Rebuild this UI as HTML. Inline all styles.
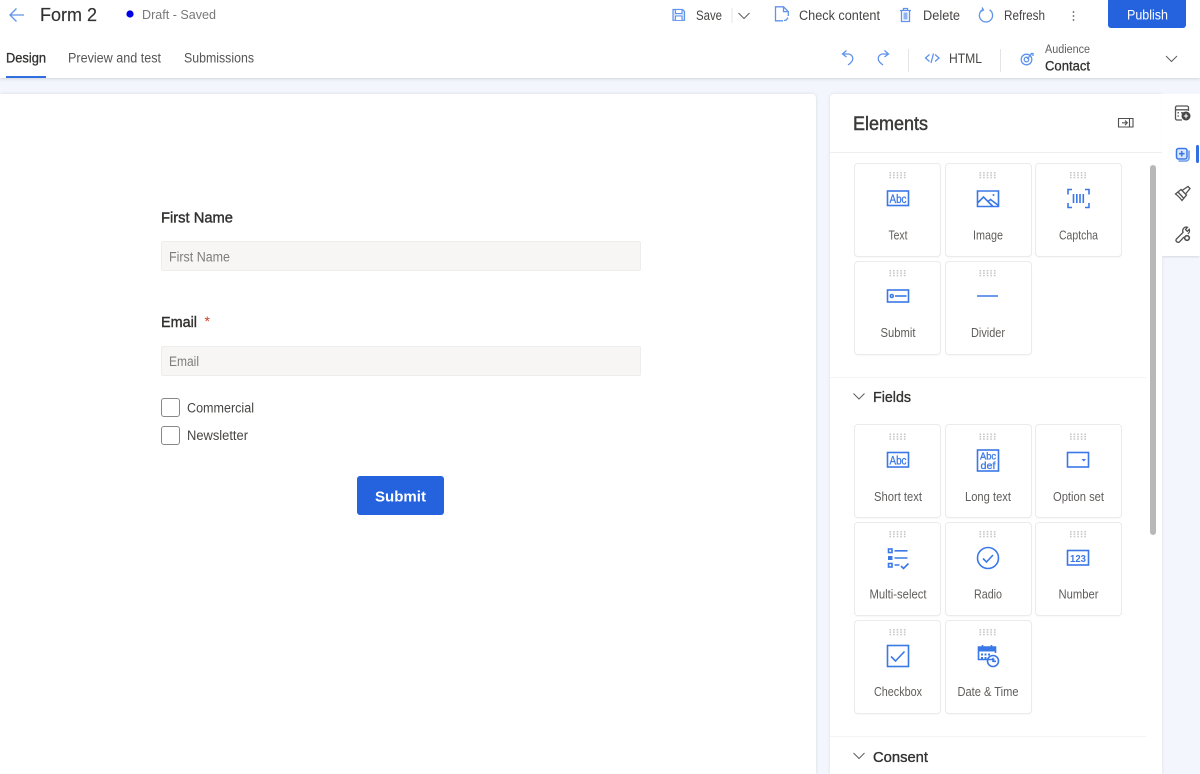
<!DOCTYPE html>
<html><head><meta charset="utf-8"><title>Form 2</title>
<style>
html,body{margin:0;padding:0;width:1200px;height:768px;overflow:hidden;background:#f3f6fd}
div{position:absolute;box-sizing:border-box}
svg{position:absolute;left:0;top:0;font-family:"Liberation Sans",sans-serif;filter:blur(.3px)}
.c{width:87px;height:94px;background:#fff;border:1px solid #ebebeb;border-radius:4px;box-shadow:0 1px 1px rgba(0,0,0,.03)}
.i{fill:none;stroke:#3b78e7;stroke-width:1.6}
.t{fill:none;stroke:#5f93ec;stroke-width:1.3}
.f{fill:#3b78e7}
.l{font-size:12.5px;fill:#605e5c;text-anchor:middle}
.h{font-size:13.5px;fill:#484644}
.a{fill:#3b78e7;stroke:#3b78e7;stroke-width:.3}
.d{fill:#c6c6c6}
</style></head><body>
<div style="left:0;top:0;width:1200px;height:78px;background:#fff;box-shadow:0 1px 3px rgba(0,0,0,.14)"></div>
<div style="left:0;top:94px;width:816px;height:680px;background:#fff;border-radius:0 4px 0 0;box-shadow:0 0 3px rgba(0,0,0,.12)"></div>
<div style="left:830px;top:94px;width:332px;height:680px;background:#fff;border-radius:4px 0 0 0;box-shadow:0 0 3px rgba(0,0,0,.1)"></div>
<div style="left:1162px;top:94px;width:38px;height:162px;background:#fff;box-shadow:0 2px 2px -1px rgba(0,0,0,.12)"></div>
<div style="left:830px;top:152px;width:332px;height:1px;background:#eee"></div>
<div style="left:830px;top:377px;width:316px;height:1px;background:#f4f4f4"></div>
<div style="left:830px;top:736px;width:316px;height:1px;background:#f4f4f4"></div>
<div style="left:1150px;top:165px;width:6px;height:370px;background:#b8b8b8;border-radius:3px"></div>
<div style="left:6px;top:76px;width:40px;height:2px;background:#2f6fe0"></div>
<div style="left:1108px;top:-2px;width:78px;height:30px;background:#2563de;border-radius:3px"></div>
<div style="left:1196px;top:145px;width:3px;height:18px;background:#2f6fe0;border-radius:2px"></div>
<div style="left:161px;top:241px;width:480px;height:30px;background:#f7f6f4;border:1px solid #eeedeb;border-radius:2px"></div>
<div style="left:161px;top:346px;width:480px;height:30px;background:#f7f6f4;border:1px solid #eeedeb;border-radius:2px"></div>
<div style="left:161px;top:398px;width:19px;height:19px;background:#fff;border:1.5px solid #8a8886;border-radius:3px"></div>
<div style="left:161px;top:426px;width:19px;height:19px;background:#fff;border:1.5px solid #8a8886;border-radius:3px"></div>
<div style="left:357px;top:476px;width:87px;height:39px;background:#2563de;border-radius:3px"></div>
<div class="c" style="left:854px;top:163px"></div><div class="c" style="left:945px;top:163px"></div><div class="c" style="left:1035px;top:163px"></div>
<div class="c" style="left:854px;top:261px"></div><div class="c" style="left:945px;top:261px"></div>
<div class="c" style="left:854px;top:424px"></div><div class="c" style="left:945px;top:424px"></div><div class="c" style="left:1035px;top:424px"></div>
<div class="c" style="left:854px;top:522px"></div><div class="c" style="left:945px;top:522px"></div><div class="c" style="left:1035px;top:522px"></div>
<div class="c" style="left:854px;top:620px"></div><div class="c" style="left:945px;top:620px"></div>

<svg width="1200" height="768" viewBox="0 0 1200 768" xmlns="http://www.w3.org/2000/svg">
<defs>
<g id="dots" class="d">
<rect x="0" y="0" width="1.6" height="1.5"/><rect x="3.6" y="0" width="1.6" height="1.5"/><rect x="7.2" y="0" width="1.6" height="1.5"/><rect x="10.8" y="0" width="1.6" height="1.5"/><rect x="14.4" y="0" width="1.6" height="1.5"/>
<rect x="0" y="2.4" width="1.6" height="1.5"/><rect x="3.6" y="2.4" width="1.6" height="1.5"/><rect x="7.2" y="2.4" width="1.6" height="1.5"/><rect x="10.8" y="2.4" width="1.6" height="1.5"/><rect x="14.4" y="2.4" width="1.6" height="1.5"/>
<rect x="0" y="4.8" width="1.6" height="1.5"/><rect x="3.6" y="4.8" width="1.6" height="1.5"/><rect x="7.2" y="4.8" width="1.6" height="1.5"/><rect x="10.8" y="4.8" width="1.6" height="1.5"/><rect x="14.4" y="4.8" width="1.6" height="1.5"/>
</g>
</defs>

<!-- header left -->
<path class="t" d="M24 15H10.500M16.500 8.500L10 15l6.500 6.500" stroke-width="1"/>
<text x="40" y="21" font-size="18.500" fill="#323130" stroke="#323130" stroke-width=".15" textLength="57" lengthAdjust="spacingAndGlyphs">Form 2</text>
<circle cx="130" cy="14" r="3.600" fill="#0000e6"/>
<text x="142" y="19" font-size="13" fill="#7a7876" textLength="74" lengthAdjust="spacingAndGlyphs">Draft - Saved</text>
<text x="6" y="62.500" font-size="13.500" fill="#323130" stroke="#323130" stroke-width=".3" textLength="40" lengthAdjust="spacingAndGlyphs">Design</text>
<text x="68" y="62.500" font-size="13.500" fill="#555" textLength="93" lengthAdjust="spacingAndGlyphs">Preview and test</text>
<text x="184" y="62.500" font-size="13.500" fill="#555" textLength="70" lengthAdjust="spacingAndGlyphs">Submissions</text>

<!-- toolbar -->
<path d="M673 9.500h9.500l2 2v8.800H673z" fill="#dbe6fa" stroke="#5f93ec" stroke-width="1.200"/>
<path d="M675.500 10v3.500h6.500V10M675.500 20v-4h6.500v4" fill="#fff" stroke="#5f93ec" stroke-width="1.100"/>
<text x="696" y="20" class="h" textLength="26" lengthAdjust="spacingAndGlyphs">Save</text>
<rect x="731.500" y="8" width="1" height="15" fill="#e4e4e4"/>
<path d="M738.500 13l5.500 5.500 5.500-5.500" fill="none" stroke="#605e5c" stroke-width="1"/>
<path class="t" d="M783 20.800h-7.500V6.800h8l4.800 4.800v4.400M783.500 6.800v4.800h4.800"/>
<path class="t" d="M784 20.500l2 -.3 2 -2.500" stroke-width="1"/>
<text x="799" y="20" class="h" textLength="81" lengthAdjust="spacingAndGlyphs">Check content</text>
<path class="t" d="M900 10.500h11M903.500 10.500V8.500h4v2M901.500 10.500v11h8v-11"/>
<path fill="#5f93ec" d="M903.500 12.500h4v7h-4z" opacity=".7"/>
<text x="923" y="20" class="h" textLength="37" lengthAdjust="spacingAndGlyphs">Delete</text>
<path class="t" d="M983 9.500a6.600 6.600 0 1 0 6.500 .3M982 7.500l1.500 2.500-2.500 1.500"/>
<text x="1004" y="20" class="h" textLength="41" lengthAdjust="spacingAndGlyphs">Refresh</text>
<circle cx="1073.500" cy="12" r=".9" fill="#605e5c"/><circle cx="1073.500" cy="16" r=".9" fill="#605e5c"/><circle cx="1073.500" cy="20" r=".9" fill="#605e5c"/>
<text x="1127" y="19.500" font-size="13.500" fill="#fff" textLength="41" lengthAdjust="spacingAndGlyphs">Publish</text>

<!-- second toolbar -->
<path class="t" d="M846.500 50.500L842.500 54l4 3M842.500 54h6a4.500 4.500 0 0 1 4.300 4.500c0 2.500-2.300 4.800-4.800 6.500"/>
<path class="t" d="M884.500 50.500l4 3.500-4 3M888.500 54h-6a4.500 4.500 0 0 0-4.300 4.500c0 2.500 2.300 4.800 4.800 6.500"/>
<rect x="908" y="49" width="1" height="23" fill="#e4e4e4"/>
<path class="t" d="M929.500 54.500l-4 3.500 4 3.500M935 54.500l4 3.500-4 3.500M933.500 53.500l-2.500 9.500"/>
<text x="949" y="63" class="h" textLength="33" lengthAdjust="spacingAndGlyphs">HTML</text>
<rect x="1000" y="49" width="1" height="23" fill="#e4e4e4"/>
<circle cx="1026.500" cy="59.500" r="5.300" class="t" stroke-width="1.500"/>
<circle cx="1026.500" cy="59.500" r="2.300" class="t" stroke-width="1.500"/>
<path class="t" d="M1027 59l5-5.500M1030.500 53.500h2.500v2.500"/>
<text x="1045" y="53" font-size="11.500" fill="#605e5c" textLength="45" lengthAdjust="spacingAndGlyphs">Audience</text>
<text x="1045" y="70.500" font-size="13.500" fill="#323130" stroke="#323130" stroke-width=".3" textLength="45" lengthAdjust="spacingAndGlyphs">Contact</text>
<path d="M1166 56l5.500 5.500 5.500-5.500" fill="none" stroke="#605e5c" stroke-width="1"/>

<!-- form -->
<text x="161" y="222.500" font-size="15" fill="#323130" stroke="#323130" stroke-width=".4" textLength="72" lengthAdjust="spacingAndGlyphs">First Name</text>
<text x="169" y="261.500" font-size="13.500" fill="#7f7d7b" textLength="61" lengthAdjust="spacingAndGlyphs">First Name</text>
<text x="161" y="327" font-size="15" fill="#323130" stroke="#323130" stroke-width=".4" textLength="36" lengthAdjust="spacingAndGlyphs">Email</text>
<text x="204.500" y="326" font-size="14" fill="#d13d1a">*</text>
<text x="169" y="366" font-size="13.500" fill="#7f7d7b" textLength="30" lengthAdjust="spacingAndGlyphs">Email</text>
<text x="187" y="412.500" font-size="13.500" fill="#484644" textLength="67" lengthAdjust="spacingAndGlyphs">Commercial</text>
<text x="187" y="440" font-size="13.500" fill="#484644" textLength="61" lengthAdjust="spacingAndGlyphs">Newsletter</text>
<text x="375" y="501.500" font-size="15" font-weight="700" fill="#fff" textLength="51" lengthAdjust="spacingAndGlyphs">Submit</text>

<!-- panel head -->
<text x="853" y="130" font-size="19" fill="#3b3a39" stroke="#3b3a39" stroke-width=".45" textLength="75" lengthAdjust="spacingAndGlyphs">Elements</text>
<path d="M1118.500 118.500h14.500v8.500h-14.500zM1129.500 118.500v8.500M1122 122.800h5M1125 120.500l2.300 2.300-2.300 2.300" fill="none" stroke="#505050" stroke-width="1.100"/>
<path d="M853.500 393.500l5.500 5.500 5.500-5.500" fill="none" stroke="#605e5c" stroke-width="1"/>
<text x="873" y="402" font-size="15" fill="#323130" stroke="#323130" stroke-width=".35" textLength="38" lengthAdjust="spacingAndGlyphs">Fields</text>
<path d="M853.500 753l5.500 5.500 5.500-5.500" fill="none" stroke="#605e5c" stroke-width="1"/>
<text x="873" y="762" font-size="15" fill="#323130" stroke="#323130" stroke-width=".35" textLength="55" lengthAdjust="spacingAndGlyphs">Consent</text>

<!-- drag dots -->
<use href="#dots" x="889.500" y="172"/><use href="#dots" x="979.500" y="172"/><use href="#dots" x="1070" y="172"/>
<use href="#dots" x="889.500" y="270"/><use href="#dots" x="979.500" y="270"/>
<use href="#dots" x="889.500" y="433.500"/><use href="#dots" x="979.500" y="433.500"/><use href="#dots" x="1070" y="433.500"/>
<use href="#dots" x="889.500" y="531"/><use href="#dots" x="979.500" y="531"/><use href="#dots" x="1070" y="531"/>
<use href="#dots" x="889.500" y="629"/><use href="#dots" x="979.500" y="629"/>

<!-- labels -->
<text x="898" y="239.500" class="l" textLength="19" lengthAdjust="spacingAndGlyphs">Text</text>
<text x="988" y="239.500" class="l" textLength="30" lengthAdjust="spacingAndGlyphs">Image</text>
<text x="1078.500" y="239.500" class="l" textLength="39" lengthAdjust="spacingAndGlyphs">Captcha</text>
<text x="898" y="337" class="l" textLength="35" lengthAdjust="spacingAndGlyphs">Submit</text>
<text x="988" y="337" class="l" textLength="34" lengthAdjust="spacingAndGlyphs">Divider</text>
<text x="898" y="501" class="l" textLength="48" lengthAdjust="spacingAndGlyphs">Short text</text>
<text x="988" y="501" class="l" textLength="46" lengthAdjust="spacingAndGlyphs">Long text</text>
<text x="1078.500" y="501" class="l" textLength="51" lengthAdjust="spacingAndGlyphs">Option set</text>
<text x="898" y="598.500" class="l" textLength="57" lengthAdjust="spacingAndGlyphs">Multi-select</text>
<text x="988" y="598.500" class="l" textLength="28" lengthAdjust="spacingAndGlyphs">Radio</text>
<text x="1078.500" y="598.500" class="l" textLength="40" lengthAdjust="spacingAndGlyphs">Number</text>
<text x="898" y="696" class="l" textLength="48" lengthAdjust="spacingAndGlyphs">Checkbox</text>
<text x="988" y="696" class="l" textLength="61" lengthAdjust="spacingAndGlyphs">Date &amp; Time</text>

<!-- Text icon -->
<rect x="887.500" y="191" width="21" height="14.500" class="i"/>
<text x="898" y="202.800" font-size="11.500" text-anchor="middle" class="a" textLength="17" lengthAdjust="spacingAndGlyphs">Abc</text>
<!-- Image icon -->
<path class="i" d="M977.500 191h21v15.500h-21zM977.500 203l6-6 9.500 9.500M988 201.500l2.500-2 8 6"/>
<circle cx="993.500" cy="195" r="1" class="f"/>
<!-- Captcha icon -->
<path class="i" d="M1068 194.500v-5h4M1085 189.500h4v5M1089 203v4.500h-4M1072 207.500h-4V203"/>
<path class="i" d="M1073.500 194v9M1076.800 194v9M1080 194v9M1083.300 194v9"/>
<!-- Submit icon -->
<rect x="887.500" y="290" width="21" height="12" class="i"/>
<circle cx="891.800" cy="296" r="1.500" class="i" stroke-width="1.200"/>
<path class="i" d="M895 296h11.500"/>
<!-- Divider -->
<path class="i" d="M977 296h21"/>

<!-- Short text -->
<rect x="887.500" y="452.500" width="21" height="14.500" class="i"/>
<text x="898" y="464.300" font-size="11.500" text-anchor="middle" class="a" textLength="17" lengthAdjust="spacingAndGlyphs">Abc</text>
<!-- Long text -->
<rect x="977.500" y="450" width="21" height="21" class="i"/>
<text x="988" y="459.500" font-size="10.500" text-anchor="middle" class="a" textLength="16" lengthAdjust="spacingAndGlyphs">Abc</text>
<text x="988" y="469" font-size="10.500" text-anchor="middle" class="a" textLength="15" lengthAdjust="spacingAndGlyphs">def</text>
<!-- Option set -->
<rect x="1067.500" y="452.500" width="21" height="14.500" class="i"/>
<path class="f" d="M1081.500 459h4.500l-2.200 2.500z"/>
<!-- Multi-select -->
<rect x="888.500" y="549" width="3.500" height="3.500" class="i" stroke-width="1.200"/>
<rect x="888" y="556" width="4.500" height="4" class="f"/>
<rect x="888.500" y="563.500" width="3.500" height="3.500" class="i" stroke-width="1.200"/>
<path class="i" d="M894.500 550.800h13M894.500 558h13M894.500 565h5M901 566l2.500 2.500 5-5"/>
<!-- Radio -->
<circle cx="988" cy="558" r="10.500" class="i"/>
<path class="i" d="M983 558.500l3.500 3.500 6.500-7"/>
<!-- Number -->
<rect x="1067.500" y="550.500" width="21" height="14.500" class="i"/>
<text x="1078" y="561.800" font-size="10.500" font-weight="700" text-anchor="middle" fill="#3b78e7" textLength="16" lengthAdjust="spacingAndGlyphs">123</text>
<!-- Checkbox -->
<rect x="887.500" y="645.500" width="21" height="21" class="i"/>
<path class="i" d="M891 656.500l4.500 4.500 9-9.500"/>
<!-- Date & Time -->
<path d="M978 647.500h17.500v4H978z" class="f"/>
<path class="i" d="M994.500 659.500h-16v-12.500h17v6M982.500 645v3.500M991.500 645v3.500" stroke-width="1.400"/>
<path class="f" d="M981 653.500h2v2h-2zM984.500 653.500h2v2h-2zM988 653.500h2v2h-2zM981 657h2v2h-2zM984.500 657h2v2h-2z"/>
<circle cx="993" cy="661" r="5.500" fill="#fff" class="i"/>
<path class="i" d="M993 657.800v3.500h3" stroke-width="1.200"/>

<!-- rail -->
<path d="M1188.500 111v-3.500a1.500 1.500 0 0 0-1.500-1.500h-10a1.500 1.500 0 0 0-1.500 1.500v11a1.500 1.500 0 0 0 1.500 1.500h5M1175.500 109.800h13M1177.500 112.800h1.500M1177.500 116h1.500M1181 112.800h2.500" fill="none" stroke="#555" stroke-width="1.300"/>
<circle cx="1186" cy="116" r="4.500" fill="#444"/>
<path d="M1186 113.800v4.400M1183.800 116h4.400" stroke="#fff" stroke-width="1.100"/>
<rect x="1176.500" y="148.500" width="10.500" height="10.500" rx="2" fill="#dbe7fb" stroke="#3b78e7" stroke-width="1.500"/>
<path class="i" d="M1181.700 151v5.500M1179 153.700h5.500" stroke-width="1.200"/>
<path class="i" d="M1189 150.500v7.500a3 3 0 0 1-3 3h-7.500" stroke-width="1.500" opacity=".75"/>
<path d="M1175.500 194L1181 189.500 1186.500 195 1182 200.500Q1178.500 196 1175.500 194zM1178 192l5.500 6M1182 190.500L1188 186.500 1190 188.500 1185.500 194" fill="none" stroke="#505050" stroke-width="1.300"/>
<path d="M1176 239.500l7-7c-1-2.500 .5-5.500 3.500-5.500l1 .3-2 2.200 1.800 1.800 2-2c.6 2-.2 3.800-1.500 4.500M1176 239.500c-.5 2 2 3.800 3.500 2.300l4.500-4.800" fill="none" stroke="#505050" stroke-width="1.300"/>
<circle cx="1187" cy="238" r="2.300" fill="none" stroke="#505050" stroke-width="1.600"/>
</svg>
</body></html>
